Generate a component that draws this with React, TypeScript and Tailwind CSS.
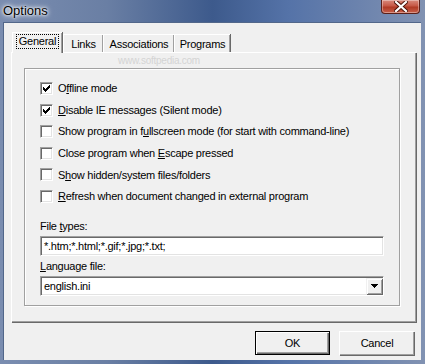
import React from 'react';

const font = { fontFamily: '"Liberation Sans", Arial, sans-serif' };

function Check() {
  // classic 7x7 tick
  const px: [number, number][] = [
    [6, 0], [5, 1], [6, 1], [0, 2], [4, 2], [5, 2], [6, 2],
    [0, 3], [1, 3], [3, 3], [4, 3], [5, 3], [0, 4], [1, 4], [2, 4], [3, 4], [4, 4],
    [1, 5], [2, 5], [3, 5], [2, 6],
  ];
  return (
    <svg width="7" height="7" viewBox="0 0 7 7" shapeRendering="crispEdges">
      {px.map(([x, y], i) => (
        <rect key={i} x={x} y={y} width="1" height="1" fill="#000" />
      ))}
    </svg>
  );
}

function Box({ checked }: { checked?: boolean }) {
  return (
    <div className="w-[13px] h-[13px] shrink-0 bg-white border border-t-[#a0a0a0] border-l-[#a0a0a0] border-b-white border-r-white shadow-[inset_1px_1px_0_#696969,inset_-1px_-1px_0_#e3e3e3] flex items-center justify-center">
      {checked && <Check />}
    </div>
  );
}

function Label({ pre, key_, post }: { pre: string; key_: string; post: string }) {
  return (
    <span>
      {pre}
      <span className="underline underline-offset-[1px]">{key_}</span>
      {post}
    </span>
  );
}

const options = [
  { pre: 'O', k: 'f', post: 'fline mode', checked: true },
  { pre: '', k: 'D', post: 'isable IE messages (Silent mode)', checked: true },
  { pre: 'Show program in f', k: 'u', post: 'llscreen mode (for start with command-line)' },
  { pre: 'Close program when ', k: 'E', post: 'scape pressed' },
  { pre: 'S', k: 'h', post: 'ow hidden/system files/folders' },
  { pre: '', k: 'R', post: 'efresh when document changed in external program' },
];

const tabs = [
  { name: 'General', w: 'w-[50px]' },
  { name: 'Links', w: 'w-[40px]' },
  { name: 'Associations', w: 'w-[71px]' },
  { name: 'Programs', w: 'w-[56px]' },
];

const sunken =
  'bg-white border border-t-[#a0a0a0] border-l-[#a0a0a0] border-b-white border-r-white shadow-[inset_1px_1px_0_#696969,inset_-1px_-1px_0_#e3e3e3]';

export default function App() {
  return (
    <div
      className="w-[425px] h-[364px] overflow-hidden relative flex flex-col bg-[linear-gradient(90deg,#7a8db0_0%,#6a7fa4_25%,#3d5a8c_50%,#5573a8_68%,#8192b2_100%)] text-[11px] text-black"
      style={font}
    >
      {/* title bar */}
      <div className="h-[22px] shrink-0 relative flex items-center pl-[3px]">
        <span className="text-[13px] text-black [text-shadow:0_0_6px_#fff,0_0_4px_#fff,0_0_2px_#fff]">Options</span>
        <div className="absolute top-0 right-[5px] w-[39px] h-[14px] rounded-b-[4px] border border-t-0 border-[#5b2019] bg-[linear-gradient(180deg,#d98a7c_0%,#c65846_45%,#b03a25_55%,#c8604a_100%)] shadow-[inset_0_0_0_1px_rgba(255,255,255,0.35)] flex items-center justify-center">
          <svg width="14" height="11" viewBox="0 0 14 11">
            <path d="M2 1 L12 10 M12 1 L2 10" stroke="#4a1208" strokeWidth="4" strokeLinecap="square" />
            <path d="M2 1 L12 10 M12 1 L2 10" stroke="#fff" strokeWidth="2.2" strokeLinecap="square" />
          </svg>
        </div>
      </div>

      {/* client area */}
      <div className="ml-[3px] w-[418px] h-[338px] bg-[#f0f0f0] border-l border-t border-[#52678a] pt-[9px] pl-[7px] pr-[6px] relative tracking-[-0.25px]">
        {/* watermark */}
        <div className="absolute left-[114px] top-[30px] text-[10px] text-[#d4d4d4] pointer-events-none">www.softpedia.com</div>

        {/* tabs */}
        <div className="flex items-end h-[20px] pl-[1px] relative z-10">
          {tabs.map((t, i) =>
            i === 0 ? (
              <div
                key={t.name}
                className={`${t.w} h-[21px] -mb-[1px] bg-[#f0f0f0] border-t border-l border-white shadow-[inset_-1px_0_0_#a0a0a0,1px_0_0_#696969] flex items-start justify-center pt-[2px]`}
              >
                <span className="px-[2px] outline outline-1 outline-dotted outline-black leading-[13px]">{t.name}</span>
              </div>
            ) : (
              <div
                key={t.name}
                className={`${t.w} h-[18px] bg-[#f0f0f0] border-t border-l border-white shadow-[inset_-1px_0_0_#a0a0a0,1px_0_0_#696969] flex items-center justify-center pt-[1px] ${i === 1 ? 'ml-[1px]' : ''}`}
              >
                {t.name}
              </div>
            )
          )}
        </div>

        {/* panel */}
        <div className="w-[405px] h-[270px] border-t border-l border-white shadow-[inset_-1px_-1px_0_#a0a0a0,1px_1px_0_#696969] pt-[15px] pl-[12px] pr-[16px]">
          <div className="h-[238px] border border-[#a0a0a0] shadow-[inset_1px_1px_0_#fff,1px_1px_0_#fff] px-[15px] pt-[13px]">
            <div className="flex flex-col gap-[8.6px]">
              {options.map((o, i) => (
                <div key={i} className="flex items-center h-[13px] gap-[5px] whitespace-nowrap">
                  <Box checked={o.checked} />
                  <Label pre={o.pre} key_={o.k} post={o.post} />
                </div>
              ))}
            </div>

            <div className="mt-[17px] h-[13px] leading-[13px]">
              <Label pre="File " key_="t" post="ypes:" />
            </div>
            <div className={`mt-[3px] h-[20px] ${sunken} flex items-center pl-[3px]`}>*.htm;*.html;*.gif;*.jpg;*.txt;</div>

            <div className="mt-[4px] h-[13px] leading-[13px]">
              <Label pre="" key_="L" post="anguage file:" />
            </div>
            <div className={`mt-[3px] h-[20px] ${sunken} flex items-center pl-[3px] pr-[1px]`}>
              <span className="flex-1">english.ini</span>
              <div className="w-[16px] h-[16px] bg-[#f0f0f0] border-t border-l border-[#f0f0f0] shadow-[inset_1px_1px_0_#fff,inset_-1px_-1px_0_#a0a0a0,1px_1px_0_#696969] flex items-center justify-center">
                <svg width="7" height="4" viewBox="0 0 7 4" shapeRendering="crispEdges">
                  <path d="M0 0h7v1H0zM1 1h5v1H1zM2 2h3v1H2zM3 3h1v1H3z" fill="#000" />
                </svg>
              </div>
            </div>
          </div>
        </div>

        {/* buttons */}
        <div className="flex justify-end gap-[9px] mt-[9px] pr-[1px]">
          <div className="w-[75px] h-[24px] border border-black bg-[#f0f0f0] shadow-[inset_1px_1px_0_#fff,inset_-1px_-1px_0_#696969,inset_-2px_-2px_0_#a0a0a0] flex items-center justify-center">
            OK
          </div>
          <div className="w-[75px] h-[24px] bg-[#f0f0f0] border-t border-l border-white shadow-[inset_-1px_-1px_0_#a0a0a0,1px_1px_0_#696969] flex items-center justify-center">
            Cancel
          </div>
        </div>
      </div>
    </div>
  );
}
